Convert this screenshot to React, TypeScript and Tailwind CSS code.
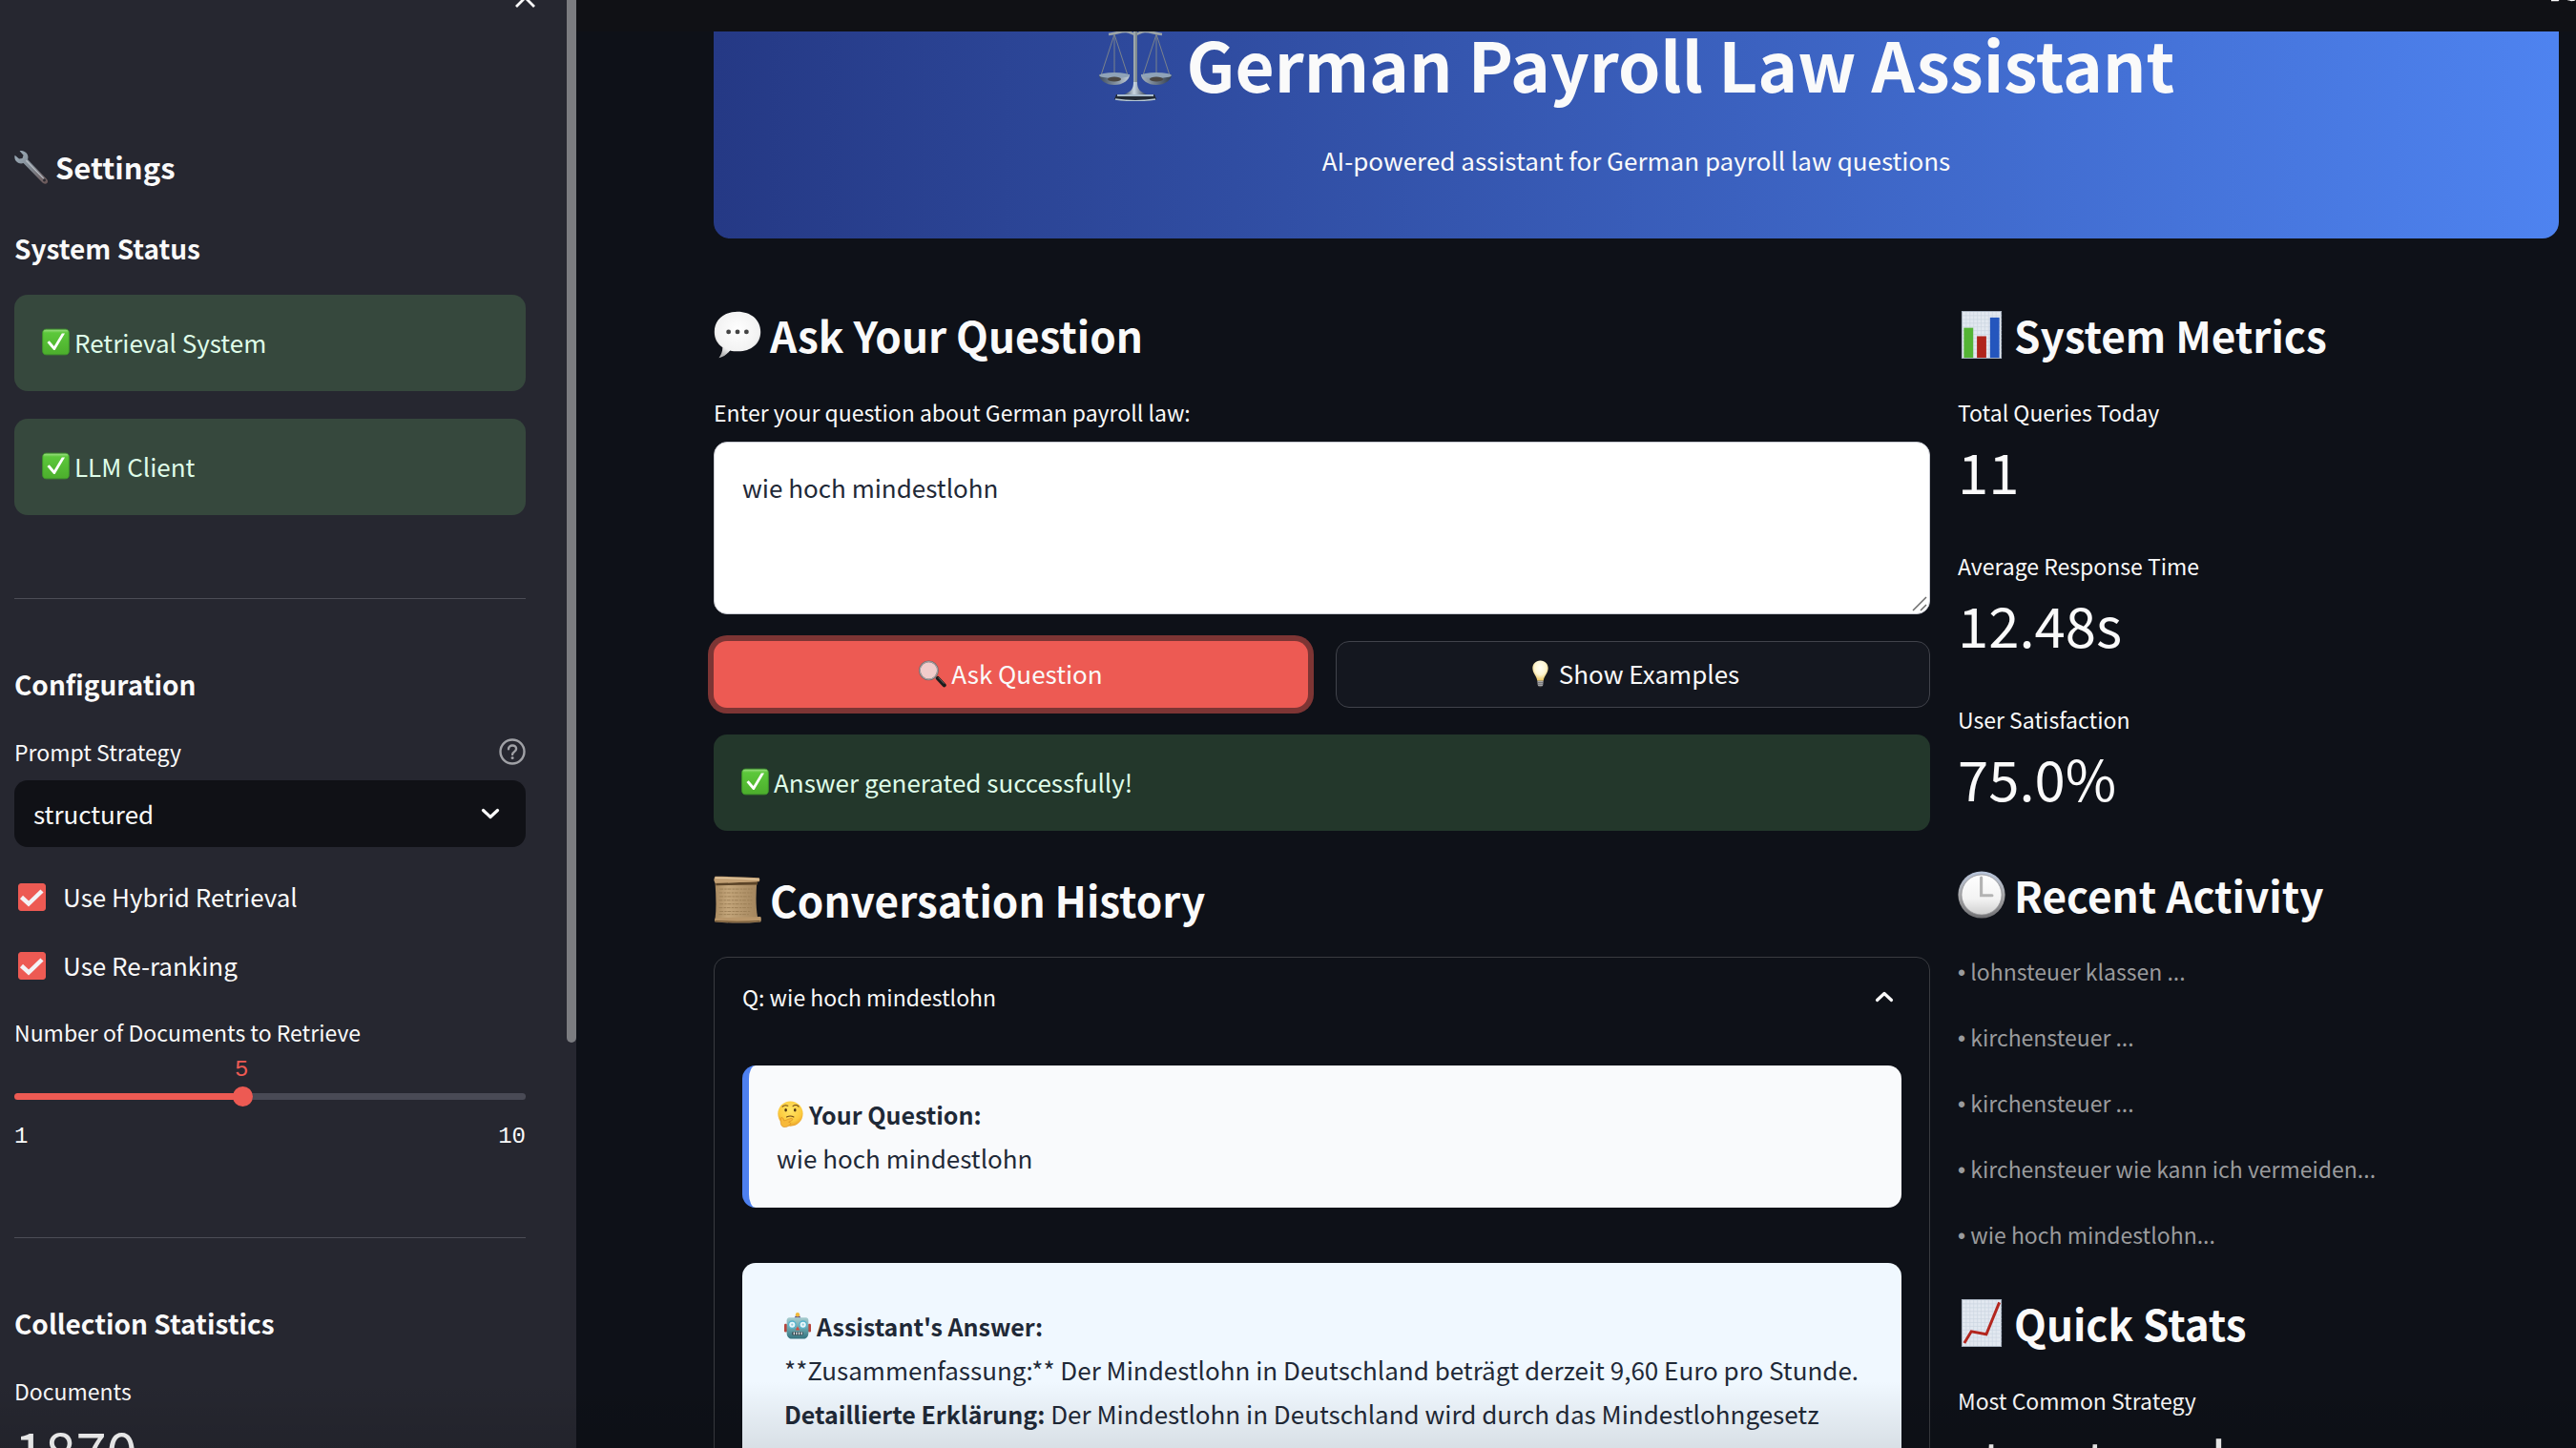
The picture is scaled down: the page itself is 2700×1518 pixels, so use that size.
import { useState, type ReactNode } from "react";

type IconProps = { className?: string };

function Wrench({ className }: IconProps) {
  return (
    <svg viewBox="0 0 64 64" className={className} aria-hidden="true">
      <defs>
        <linearGradient id="wr" x1="0" y1="0" x2="1" y2="1">
          <stop offset="0" stopColor="#9fb0bd" />
          <stop offset="0.5" stopColor="#7f8790" />
          <stop offset="1" stopColor="#6b5656" />
        </linearGradient>
      </defs>
      <path
        d="M10 2C15 1 21 3 24 8c2 4 2 7 1 10l35 36c3 3 3 6 1 8-2 2-6 2-9-1L17 25C12 27 6 25 3 21 1 18 0 14 1 10l8 7 6-1 2-6z"
        fill="url(#wr)"
      />
      <path d="M22 20l33 34" stroke="#b9bfc6" strokeWidth="2" />
      <circle cx="56" cy="57" r="2.6" fill="#2b2a31" />
    </svg>
  );
}

function Check({ className }: IconProps) {
  return (
    <svg viewBox="0 0 64 64" className={className} aria-hidden="true">
      <defs>
        <linearGradient id="ck" x1="0" y1="0" x2="0" y2="1">
          <stop offset="0" stopColor="#a5e08c" />
          <stop offset="0.14" stopColor="#5cc83b" />
          <stop offset="1" stopColor="#4cae2c" />
        </linearGradient>
      </defs>
      <rect x="1.5" y="2.5" width="61" height="59" rx="9" fill="url(#ck)" stroke="#3f9a2a" strokeWidth="2" />
      <path d="M12 33l5-4 11 13L46 12h7L30 51h-3z" fill="#fff" />
    </svg>
  );
}

function Scales({ className }: IconProps) {
  return (
    <svg viewBox="0 0 78 80" className={className} aria-hidden="true">
      <defs>
        <linearGradient id="sc" x1="0" y1="0" x2="1" y2="0">
          <stop offset="0" stopColor="#3c4a5c" />
          <stop offset="0.45" stopColor="#c9d6e2" />
          <stop offset="1" stopColor="#2f3b4c" />
        </linearGradient>
      </defs>
      <path d="M11 10c8-1 12-3 18-3 5 0 7 3 10 3s5-3 10-3c6 0 10 2 18 3" fill="none" stroke="#9aa3a8" strokeWidth="2.6" />
      <path d="M17 10L3 53M17 10l14 43M17 10v43M61 10L47 53M61 10l14 43M61 10v43" stroke="#7b838c" strokeWidth="1" fill="none" />
      <path d="M39 3v60" stroke="#7f8a90" strokeWidth="4" />
      <path d="M38 3v60" stroke="#b8c2c6" strokeWidth="1" />
      <path d="M1 52h32c0 6-7 11-16 11S1 58 1 52zM45 52h32c0 6-7 11-16 11s-16-5-16-11z" fill="url(#sc)" />
      <ellipse cx="17" cy="53" rx="16" ry="3" fill="#8fa3b8" />
      <ellipse cx="61" cy="53" rx="16" ry="3" fill="#8fa3b8" />
      <ellipse cx="17" cy="57" rx="7" ry="2.5" fill="#4a4642" />
      <ellipse cx="61" cy="57" rx="7" ry="2.5" fill="#4a4642" />
      <path d="M37 60h4c0 8 3 10 10 13H27c7-3 10-5 10-13z" fill="url(#sc)" />
      <path d="M19 73h40l2 5c-12 3-32 3-44 0z" fill="#222a35" />
      <path d="M20 73h38v2H20z" fill="#a9bccd" />
      <path d="M18 78c12 2 30 2 42 0" stroke="#b7c9d8" strokeWidth="1.5" fill="none" />
    </svg>
  );
}

function Bubble({ className }: IconProps) {
  return (
    <svg viewBox="0 0 64 64" className={className} aria-hidden="true">
      <defs>
        <radialGradient id="bb" cx="0.5" cy="0.4" r="0.62">
          <stop offset="0" stopColor="#fff" />
          <stop offset="0.75" stopColor="#f2f2f2" />
          <stop offset="1" stopColor="#b5b5b5" />
        </radialGradient>
      </defs>
      <path d="M32 1c18 0 31 11 31 27S50 54 33 54c-4 0-8 0-11-1-4 5-9 9-15 10 3-4 5-9 5-14C5 44 1 37 1 28 1 12 14 1 32 1z" fill="url(#bb)" />
      <circle cx="20" cy="28" r="3.1" fill="#444" />
      <circle cx="32" cy="28" r="3.1" fill="#444" />
      <circle cx="44" cy="28" r="3.1" fill="#444" />
    </svg>
  );
}

function Magnifier({ className }: IconProps) {
  return (
    <svg viewBox="0 0 64 64" className={className} aria-hidden="true">
      <path d="M37 38l6 6" stroke="#8d8d8d" strokeWidth="5" />
      <path d="M44 42l15 16" stroke="#1c1c1c" strokeWidth="9" strokeLinecap="round" />
      <path d="M46 41l12 13" stroke="#6b6b6b" strokeWidth="2" strokeLinecap="round" />
      <circle cx="23" cy="24" r="21" fill="#f1cccb" stroke="#6f6a6c" strokeWidth="4" />
      <circle cx="23" cy="24" r="20.5" fill="none" stroke="#c4bfc1" strokeWidth="1.6" />
    </svg>
  );
}

function Bulb({ className }: IconProps) {
  return (
    <svg viewBox="0 0 38 64" className={className} aria-hidden="true">
      <defs>
        <radialGradient id="bl" cx="0.5" cy="0.35" r="0.6">
          <stop offset="0" stopColor="#fffef4" />
          <stop offset="0.6" stopColor="#fdf5d2" />
          <stop offset="1" stopColor="#ecca6c" />
        </radialGradient>
      </defs>
      <path d="M19 1c11 0 18 8 18 18 0 11-9 17-11 29H12C10 36 1 30 1 19 1 9 8 1 19 1z" fill="url(#bl)" />
      <path d="M12 48h14l-1 10c-2 5-10 5-12 0z" fill="#a9a9ab" />
      <path d="M13 52h12M13 56h12" stroke="#5f5f62" strokeWidth="1.5" />
      <path d="M15 60h8l-2 3h-4z" fill="#3a3a3a" />
    </svg>
  );
}

function Scroll({ className }: IconProps) {
  return (
    <svg viewBox="0 0 64 64" className={className} aria-hidden="true">
      <defs>
        <linearGradient id="sr" x1="0" y1="0" x2="1" y2="0">
          <stop offset="0" stopColor="#a98a60" />
          <stop offset="0.3" stopColor="#c4a67b" />
          <stop offset="1" stopColor="#a3855d" />
        </linearGradient>
      </defs>
      <path d="M2 9l56-2c-1 16-2 32 1 49L2 58C4 42 3 26 2 9z" fill="url(#sr)" />
      <path d="M3 10l56-2v4L3 13z" fill="#5b4428" />
      <path d="M2 1c20 0 40 1 59 2 1 2 1 3 0 5L2 10c-2-3-2-6 0-9z" fill="#c2a074" />
      <path d="M2 3c20 0 40 1 59 2" stroke="#e2c8a0" strokeWidth="1.6" fill="none" />
      <path d="M2 57l61-2c1 2 1 5 0 7-20 2-41 2-61 0-1-1-1-3 0-5z" fill="#b8966a" />
      <path d="M2 61c20 1 40 1 60 0" stroke="#6e5433" strokeWidth="1.4" fill="none" />
      <path d="M8 18h44M7 23h45M8 28h43M7 33h45M8 38h43M7 43h44M8 48h42M7 52h40" stroke="#9c7f56" strokeWidth="1.2" strokeDasharray="5 1.5 3 1" />
    </svg>
  );
}

function Thinking({ className }: IconProps) {
  return (
    <svg viewBox="0 0 64 64" className={className} aria-hidden="true">
      <defs>
        <radialGradient id="th" cx="0.5" cy="0.35" r="0.65">
          <stop offset="0" stopColor="#ffe566" />
          <stop offset="0.7" stopColor="#fccb3e" />
          <stop offset="1" stopColor="#e9a02c" />
        </radialGradient>
      </defs>
      <circle cx="33" cy="31" r="30" fill="url(#th)" />
      <path d="M14 14c3-3 8-4 13-2M39 13c5-4 11-3 14 1" stroke="#6b4517" strokeWidth="2.4" fill="none" strokeLinecap="round" />
      <ellipse cx="22" cy="22" rx="3" ry="4" fill="#4f3413" />
      <ellipse cx="44" cy="22" rx="3" ry="4" fill="#4f3413" />
      <path d="M24 39c6-3 12-3 17 0" stroke="#6b4517" strokeWidth="2.4" fill="none" strokeLinecap="round" />
      <path d="M10 41c2-2 5-1 6 2l2 5 16-6c4-1 6 3 3 5l-8 4c5 0 6 4 2 7-4 4-8 5-13 5-6-1-10-6-8-22z" fill="#f7b93b" stroke="#d68a20" strokeWidth="1.4" />
    </svg>
  );
}

function Robot({ className }: IconProps) {
  return (
    <svg viewBox="0 0 64 64" className={className} aria-hidden="true">
      <defs>
        <linearGradient id="rb" x1="0" y1="0" x2="0" y2="1">
          <stop offset="0" stopColor="#a7cdd0" />
          <stop offset="0.6" stopColor="#5f9da5" />
          <stop offset="1" stopColor="#33717d" />
        </linearGradient>
      </defs>
      <rect x="0" y="27" width="7" height="20" rx="3" fill="#b8453d" />
      <rect x="57" y="27" width="7" height="20" rx="3" fill="#b8453d" />
      <path d="M24 13l3-5h10l3 5z" fill="#5a4f86" />
      <circle cx="32" cy="5" r="5" fill="#f2b93c" />
      <path d="M12 12h40c4 0 6 3 6 7v30c0 8-5 14-12 14H18C11 63 6 57 6 49V19c0-4 2-7 6-7z" fill="url(#rb)" />
      <circle cx="19" cy="29" r="8.5" fill="#e9f7fb" stroke="#54b3cc" strokeWidth="3" />
      <circle cx="45" cy="29" r="8.5" fill="#e9f7fb" stroke="#54b3cc" strokeWidth="3" />
      <circle cx="19" cy="29" r="2.6" fill="#8fc8d6" />
      <circle cx="45" cy="29" r="2.6" fill="#8fc8d6" />
      <path d="M32 33l5 9H27z" fill="#d9483c" />
      <rect x="19" y="46" width="26" height="8" rx="2" fill="#2c3d44" />
      <path d="M22 47h3v6h-3zM28 47h3v6h-3zM34 47h3v6h-3zM40 47h3v6h-3z" fill="#e8f2f4" />
    </svg>
  );
}

function ChartPaper({ children }: { children: ReactNode }) {
  return (
    <>
      <rect x="4.500" y="0.500" width="42" height="50" fill="#e2e8f0" stroke="#a9b3bf" />
      <path
        d="M9 1v49M13 1v49M17 1v49M21 1v49M25 1v49M29 1v49M33 1v49M37 1v49M41 1v49M5 5h42M5 9h42M5 13h42M5 17h42M5 21h42M5 25h42M5 29h42M5 33h42M5 37h42M5 41h42M5 45h42"
        stroke="#cbd6e2"
        strokeWidth="0.7"
      />
      {children}
    </>
  );
}

function BarChart({ className }: IconProps) {
  return (
    <svg viewBox="0 0 51 51" className={className} aria-hidden="true">
      <ChartPaper>
        <rect x="6.500" y="18" width="10" height="32" fill="#54b435" />
        <rect x="20.500" y="27" width="10" height="23" fill="#b0241b" />
        <rect x="34.500" y="7" width="10" height="43" fill="#2456bd" />
      </ChartPaper>
    </svg>
  );
}

function LineChart({ className }: IconProps) {
  return (
    <svg viewBox="0 0 51 51" className={className} aria-hidden="true">
      <ChartPaper>
        <path d="M7 47L14.500 34.500l16 3L44.500 3.500" fill="none" stroke="#b3261e" strokeWidth="3" />
      </ChartPaper>
    </svg>
  );
}

function Clock({ className }: IconProps) {
  return (
    <svg viewBox="0 0 64 64" className={className} aria-hidden="true">
      <defs>
        <linearGradient id="cr" x1="0" y1="0" x2="0" y2="1">
          <stop offset="0" stopColor="#b9c6dc" />
          <stop offset="0.5" stopColor="#a9a9ab" />
          <stop offset="1" stopColor="#6f6f72" />
        </linearGradient>
        <linearGradient id="cf" x1="0" y1="0" x2="0" y2="1">
          <stop offset="0" stopColor="#fff" />
          <stop offset="0.6" stopColor="#f3f3f3" />
          <stop offset="1" stopColor="#cfcfcf" />
        </linearGradient>
      </defs>
      <circle cx="32" cy="32" r="31.500" fill="url(#cr)" />
      <circle cx="32" cy="32" r="27" fill="url(#cf)" stroke="#8c8c90" strokeWidth="1" />
      <path d="M31.500 9v24H46" fill="none" stroke="#b3b3b3" strokeWidth="4" strokeLinecap="round" />
    </svg>
  );
}

function Chevron({ className, up }: IconProps & { up?: boolean }) {
  return (
    <svg viewBox="0 0 20 12" className={className} aria-hidden="true">
      <path
        d={up ? "M2.500 9.500L10 2.500l7.500 7" : "M2.500 2.500L10 9.500l7.500-7"}
        fill="none"
        stroke="currentColor"
        strokeWidth="3.200"
        strokeLinecap="round"
        strokeLinejoin="round"
      />
    </svg>
  );
}

function StatusBox({ dark, children }: { dark?: boolean; children: ReactNode }) {
  return (
    <div
      role="status"
      className={
        (dark ? "bg-[#23372b]" : "bg-[#36483d]") +
        " flex h-[101px] items-center gap-[5px] rounded-[14px] px-[29px] pb-[2px] text-[26px] leading-[46px] text-[#dffde9]"
      }
    >
      <Check className="size-[29px]" />
      {children}
    </div>
  );
}

function SideHeading({ children }: { children: ReactNode }) {
  return <h3 className="text-[28px] font-bold leading-[36px]">{children}</h3>;
}

function Heading({ icon, children }: { icon: ReactNode; children: ReactNode }) {
  return (
    <h2 className="flex items-center gap-[9px] whitespace-nowrap text-[44px] font-bold leading-[60px]">
      {icon}
      {children}
    </h2>
  );
}

function Metric({ label, value }: { label: string; value: string }) {
  return (
    <div className="whitespace-nowrap">
      <div className="text-[23px] leading-[36px]">{label}</div>
      <div className="text-[58px] leading-[86px]">{value}</div>
    </div>
  );
}

function CheckOption({ id, label }: { id: string; label: string }) {
  const [on, setOn] = useState(true);
  return (
    <div className="flex items-center gap-[18px] pl-1 text-[26px] leading-[46px]">
      <span className="relative flex size-[29px]">
        <input
          id={id}
          type="checkbox"
          checked={on}
          onChange={(e) => setOn(e.target.checked)}
          className="size-full appearance-none rounded-[3px] border border-[#a3a8b8] checked:border-[#ed5a53] checked:bg-[#ed5a53]"
        />
        {on && (
          <svg viewBox="0 0 29 29" className="pointer-events-none absolute inset-0" aria-hidden="true">
            <path d="M3.500 14.500l7.500 7L25 8" fill="none" stroke="#f3f3f6" strokeWidth="4.500" />
          </svg>
        )}
      </span>
      <label htmlFor={id}>{label}</label>
    </div>
  );
}

const strategies = ["structured"];
const activity = [
  "lohnsteuer klassen ...",
  "kirchensteuer ...",
  "kirchensteuer ...",
  "kirchensteuer wie kann ich vermeiden...",
  "wie hoch mindestlohn...",
];

function Sidebar() {
  const [docs, setDocs] = useState(5);
  const share = ((docs - 1) / 9) * 100;
  return (
    <aside className="flex w-[604px] shrink-0 bg-[#262730]">
      <div className="flex min-w-0 flex-1 flex-col pl-[15px] pr-[43px]">
        <div className="flex h-[153px] shrink-0 items-start justify-end">
          <button type="button" aria-label="Close sidebar" className="-mr-[10px] -mt-[13px]">
            <svg viewBox="0 0 21 21" className="size-[21px]" aria-hidden="true">
              <path d="M1 1l19 19M20 1L1 20" stroke="#fafafa" strokeWidth="2.800" />
            </svg>
          </button>
        </div>
        <h2 className="flex items-center gap-[7px] text-[31px] font-bold leading-[44px]">
          <Wrench className="size-[36px]" />
          Settings
        </h2>
        <div className="mt-[45px]">
          <SideHeading>System Status</SideHeading>
        </div>
        <div className="mt-[31px] flex flex-col gap-[29px]">
          <StatusBox>Retrieval System</StatusBox>
          <StatusBox>LLM Client</StatusBox>
        </div>
        <hr className="mt-[87px] border-[#4c4d56]" />
        <div className="mt-[71px]">
          <SideHeading>Configuration</SideHeading>
        </div>
        <div className="mt-[35px] flex items-center justify-between text-[23px] leading-[36px]">
          <label htmlFor="strategy">Prompt Strategy</label>
          <button type="button" aria-label="Help">
            <svg viewBox="0 0 28 28" className="size-[28px]" fill="none" stroke="#a0a1a6" aria-hidden="true">
              <circle cx="14" cy="14" r="12.500" strokeWidth="2.400" />
              <path d="M10 11.300c0-2.300 1.800-3.800 4.100-3.800s4 1.500 4 3.600c0 3-4 3-4 5.800" strokeWidth="2.400" strokeLinecap="round" />
              <circle cx="14.100" cy="20.500" r="0.800" strokeWidth="1.500" />
            </svg>
          </button>
        </div>
        <div className="relative mt-[12px]">
          <select
            id="strategy"
            className="h-[70px] w-full appearance-none rounded-[14px] bg-[#101116] px-[20px] text-[26px] leading-[46px]"
          >
            {strategies.map((s) => (
              <option key={s}>{s}</option>
            ))}
          </select>
          <Chevron className="pointer-events-none absolute right-[27px] top-[29px] h-[12px] w-[20px]" />
        </div>
        <div className="mt-[29px] flex flex-col gap-[26px]">
          <CheckOption id="hybrid" label="Use Hybrid Retrieval" />
          <CheckOption id="rerank" label="Use Re-ranking" />
        </div>
        <label htmlFor="docs" className="mt-[29px] text-[23px] leading-[36px]">
          Number of Documents to Retrieve
        </label>
        <div className="mt-[10px] flex font-['Liberation_Mono',monospace] text-[24px] leading-[24px] text-[#ed5a53]">
          <output htmlFor="docs" className="-translate-x-1/2" style={{ marginLeft: `${share}%` }}>
            {docs}
          </output>
        </div>
        <input
          id="docs"
          type="range"
          min={1}
          max={10}
          value={docs}
          onChange={(e) => setDocs(Number(e.target.value))}
          style={{ backgroundImage: `linear-gradient(to right, #ed5a53 ${share}%, #494a55 ${share}%)` }}
          className="my-[7px] mt-[12px] h-[7px] w-full appearance-none rounded-full [&::-webkit-slider-thumb]:size-[21px] [&::-webkit-slider-thumb]:appearance-none [&::-webkit-slider-thumb]:rounded-full [&::-webkit-slider-thumb]:bg-[#ed5a53]"
        />
        <div className="mt-[20px] flex justify-between font-['Liberation_Mono',monospace] text-[24px] leading-[24px]">
          <span>1</span>
          <span>10</span>
        </div>
        <hr className="mt-[93px] border-[#4c4d56]" />
        <div className="mb-[35px] mt-[71px]">
          <SideHeading>Collection Statistics</SideHeading>
        </div>
        <Metric label="Documents" value="1870" />
      </div>
      <div className="h-[72%] w-[10px] shrink-0 rounded-b-full bg-[#7b7c80]" />
    </aside>
  );
}

function Conversation() {
  const [open, setOpen] = useState(true);
  return (
    <section className="mt-[30px] rounded-[14px] border border-[#393b40] px-[29px] pb-[29px] pt-[23px]">
      <button
        type="button"
        aria-expanded={open}
        onClick={() => setOpen(!open)}
        className="flex w-full items-center justify-between pr-[8px] text-[23px] leading-[36px]"
      >
        Q: wie hoch mindestlohn
        <Chevron up={open} className="h-[12px] w-[20px]" />
      </button>
      {open && (
        <div className="mt-[54px] flex flex-col gap-[58px] text-[26px] leading-[46px] text-[#1f2937]">
          <div className="rounded-[14px] border-l-[7px] border-[#4d80ef] bg-[#f9fafc] px-[29px] pb-[29px] pt-[28px]">
            <strong className="flex items-center gap-[6px] text-[25px]">
              <Thinking className="size-[28px]" />
              Your Question:
            </strong>
            <p>wie hoch mindestlohn</p>
          </div>
          <div className="rounded-[14px] bg-[#f0f8ff] px-[44px] py-[43px]">
            <strong className="flex items-center gap-[6px] text-[25px]">
              <Robot className="size-[28px]" />
              Assistant's Answer:
            </strong>
            <p>**Zusammenfassung:** Der Mindestlohn in Deutschland beträgt derzeit 9,60 Euro pro Stunde.</p>
            <p>
              <strong className="text-[25px]">Detaillierte Erklärung:</strong> Der Mindestlohn in Deutschland wird durch
              das Mindestlohngesetz
            </p>
          </div>
        </div>
      )}
    </section>
  );
}

export default function App() {
  return (
    <div className="relative flex h-screen overflow-hidden bg-[#0e1118] font-['Noto_Sans_CJK_SC',sans-serif] text-[#fafafa]">
      <Sidebar />
      <div className="flex min-w-0 flex-1 flex-col">
        <div className="flex h-[33px] shrink-0 items-start justify-end bg-[#101115]">
          <svg viewBox="0 0 26 2" className="h-[2px] w-[26px]" aria-hidden="true">
            <path d="M0 0h8.500l-1 1.200H0zM17 0h8.500c-1 1.600-7 1.600-8.500 0z" fill="#fafafa" />
          </svg>
        </div>
        <main className="min-h-0 flex-1 overflow-hidden pl-[144px] pr-[18px]">
          <header className="-mt-[68px] flex flex-col items-center gap-[36px] rounded-[17px] bg-linear-to-r from-[#253985] to-[#4e83f0] pb-[59px] pt-[58px]">
            <h1 className="flex items-center gap-[15px] whitespace-nowrap text-[71px] font-bold leading-[86px]">
              <Scales className="h-[80px] w-[78px]" />
              German Payroll Law Assistant
            </h1>
            <p className="text-[26px] leading-[46px]">AI-powered assistant for German payroll law questions</p>
          </header>
          <div className="mt-[71px] grid grid-cols-[85fr_42fr] gap-[29px]">
            <div className="min-w-0">
              <Heading icon={<Bubble className="size-[50px]" />}>Ask Your Question</Heading>
              <label htmlFor="question" className="mt-[33px] block text-[23px] leading-[36px]">
                Enter your question about German payroll law:
              </label>
              <div className="relative mt-[13px] flex">
                <textarea
                  id="question"
                  defaultValue="wie hoch mindestlohn"
                  className="h-[181px] w-full resize-none rounded-[14px] border border-[#c9cbd3] bg-white px-[29px] py-[24px] text-[26px] leading-[46px] text-[#1f2937]"
                />
                <svg viewBox="0 0 16 16" className="pointer-events-none absolute bottom-[3px] right-[3px] size-[16px]" aria-hidden="true">
                  <path d="M1 15L15 1M9 15l6-6" stroke="#6b6b6b" strokeWidth="1.500" />
                </svg>
              </div>
              <div className="mt-[28px] grid grid-cols-2 gap-[29px] text-[26px] leading-[46px]">
                <button
                  type="button"
                  className="flex h-[70px] items-center justify-center gap-[5px] rounded-[14px] bg-[#ed5a53] pb-[2px] ring-[6px] ring-[#7d3534]"
                >
                  <Magnifier className="size-[29px]" />
                  Ask Question
                </button>
                <button
                  type="button"
                  className="flex h-[70px] items-center justify-center gap-[5px] rounded-[14px] border border-[#41434b] bg-[#14171f] pb-[2px]"
                >
                  <Bulb className="size-[29px]" />
                  Show Examples
                </button>
              </div>
              <div className="mb-[42px] mt-[28px]">
                <StatusBox dark>Answer generated successfully!</StatusBox>
              </div>
              <Heading icon={<Scroll className="size-[50px]" />}>Conversation History</Heading>
              <Conversation />
            </div>
            <div className="min-w-0">
              <Heading icon={<BarChart className="size-[50px]" />}>System Metrics</Heading>
              <div className="mb-[50px] mt-[33px] flex flex-col gap-[39px]">
                <Metric label="Total Queries Today" value="11" />
                <Metric label="Average Response Time" value="12.48s" />
                <Metric label="User Satisfaction" value="75.0%" />
              </div>
              <Heading icon={<Clock className="size-[50px]" />}>Recent Activity</Heading>
              <div className="mb-[45px] mt-[32px] flex flex-col gap-[33px] text-[23px] leading-[36px] text-[#9a9b9d]">
                {activity.map((a, i) => (
                  <p key={i}>
                    <span className="font-['Liberation_Sans',sans-serif] leading-none">•</span> {a}
                  </p>
                ))}
              </div>
              <Heading icon={<LineChart className="size-[50px]" />}>Quick Stats</Heading>
              <div className="mt-[33px]">
                <Metric label="Most Common Strategy" value="structured" />
              </div>
            </div>
          </div>
        </main>
      </div>
      <div className="pointer-events-none absolute inset-x-0 bottom-0 h-[70px] bg-linear-to-b from-transparent to-black/10" />
    </div>
  );
}
